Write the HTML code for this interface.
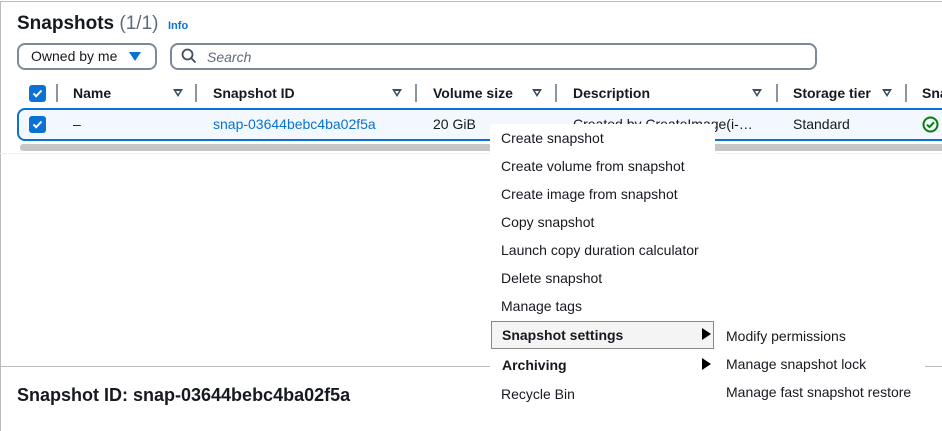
<!DOCTYPE html>
<html><head><style>
*{margin:0;padding:0;box-sizing:border-box}
body{width:942px;height:423px;overflow:hidden;background:#fff;font-family:"Liberation Sans",Arial,sans-serif;color:#16191f;position:relative}
.a{position:absolute;white-space:nowrap}
.frame{left:0;top:1px;width:960px;height:430px;border-left:1px solid #bbb;border-top:1px solid #bbb}
.h{font-weight:bold;font-size:14px;color:#16191f}
.sep{position:absolute;top:84px;width:2px;height:18px;background:#8c959f}
.tri{position:absolute;top:89px;width:0;height:0;border-left:5px solid transparent;border-right:5px solid transparent;border-top:8px solid #414d5c}
.tri:after{content:"";position:absolute;left:-2px;top:-6px;border-left:2px solid transparent;border-right:2px solid transparent;border-top:3px solid #fff}
.cb{position:absolute;width:17px;height:17px;background:#0972d3;border-radius:3px}
.cb svg{position:absolute;left:2px;top:2px}
.mi{position:absolute;left:501px;font-size:14px}
.si{position:absolute;left:726px;font-size:14px}
</style></head><body>
<div class="a frame"></div>
<div class="a" style="left:17px;top:13px;font-size:19px;font-weight:bold">Snapshots <span style="font-weight:normal;color:#5f6b7a">(1/1)</span></div>
<div class="a" style="left:168px;top:20px;font-size:11px;font-weight:bold;color:#0972d3">Info</div>
<div class="a" style="left:17px;top:43px;width:140px;height:27px;border:2px solid #7d8998;border-radius:8px"></div>
<div class="a" style="left:31px;top:48px;font-size:14px">Owned by me</div>
<div class="a" style="left:129px;top:52px;border-left:6px solid transparent;border-right:6px solid transparent;border-top:9px solid #0972d3"></div>
<div class="a" style="left:170px;top:43px;width:647px;height:27px;border:2px solid #7d8998;border-radius:8px"></div>
<svg class="a" style="left:181px;top:48px" width="16" height="16" viewBox="0 0 16 16"><circle cx="6.5" cy="6.5" r="5" fill="none" stroke="#414d5c" stroke-width="1.8"/><path d="M10.3 10.3L14.5 14.5" stroke="#414d5c" stroke-width="1.8"/></svg>
<div class="a" style="left:207px;top:49px;font-size:14px;font-style:italic;color:#5f6b7a">Search</div>

<div class="cb" style="left:29px;top:85px"><svg width="13" height="13" viewBox="0 0 13 13"><path d="M2.5 6.5L5.2 9.2L10.5 3.5" stroke="#fff" stroke-width="2" fill="none"/></svg></div>
<div class="sep" style="left:56px"></div>
<div class="a h" style="left:73px;top:85px">Name</div><div class="tri" style="left:173px"></div>
<div class="sep" style="left:195px"></div>
<div class="a h" style="left:213px;top:85px">Snapshot ID</div><div class="tri" style="left:392px"></div>
<div class="sep" style="left:415px"></div>
<div class="a h" style="left:433px;top:85px">Volume size</div><div class="tri" style="left:532px"></div>
<div class="sep" style="left:555px"></div>
<div class="a h" style="left:573px;top:85px">Description</div><div class="tri" style="left:752px"></div>
<div class="sep" style="left:776px"></div>
<div class="a h" style="left:793px;top:85px">Storage tier</div><div class="tri" style="left:882px"></div>
<div class="sep" style="left:905px"></div>
<div class="a h" style="left:922px;top:85px">Snapshot</div>

<div class="a" style="left:17px;top:108px;width:940px;height:33px;background:#f2f8fd;border:2px solid #0972d3;border-radius:8px"></div>
<div class="cb" style="left:29px;top:116px"><svg width="13" height="13" viewBox="0 0 13 13"><path d="M2.5 6.5L5.2 9.2L10.5 3.5" stroke="#fff" stroke-width="2" fill="none"/></svg></div>
<div class="a" style="left:73px;top:116px;font-size:14px">–</div>
<div class="a" style="left:213px;top:116px;font-size:14px;color:#0972d3">snap-03644bebc4ba02f5a</div>
<div class="a" style="left:433px;top:116px;font-size:14px">20 GiB</div>
<div class="a" style="left:573px;top:116px;font-size:14px">Created by CreateImage(i-…</div>
<div class="a" style="left:793px;top:116px;font-size:14px">Standard</div>
<svg class="a" style="left:922px;top:116px" width="17" height="17" viewBox="0 0 17 17"><circle cx="8.5" cy="8.5" r="7" fill="none" stroke="#037f0c" stroke-width="2"/><path d="M5 8.7L7.5 11L12 6.3" stroke="#037f0c" stroke-width="2" fill="none"/></svg>
<div class="a" style="left:20px;top:144px;width:930px;height:7px;background:#c6c6c6;border-radius:3px"></div>
<div class="a" style="left:0;top:153px;width:942px;height:1px;background:#eee"></div>

<div class="a" style="left:0;top:366px;width:942px;height:1px;background:#bbb"></div>
<div class="a" style="left:17px;top:385px;font-size:18px;font-weight:bold">Snapshot ID: snap-03644bebc4ba02f5a</div>

<div class="a" style="left:490px;top:124px;width:225px;height:290px;background:#fff"></div>
<div class="a" style="left:715px;top:320px;width:210px;height:94px;background:#fff"></div>
<div class="a" style="left:491px;top:321px;width:223px;height:28px;background:#f4f4f4;border:1px solid #888"></div>
<div class="mi" style="top:130px">Create snapshot</div>
<div class="mi" style="top:158px">Create volume from snapshot</div>
<div class="mi" style="top:186px">Create image from snapshot</div>
<div class="mi" style="top:214px">Copy snapshot</div>
<div class="mi" style="top:242px">Launch copy duration calculator</div>
<div class="mi" style="top:270px">Delete snapshot</div>
<div class="mi" style="top:298px">Manage tags</div>
<div class="mi" style="top:327px;left:502px;font-weight:bold">Snapshot settings</div>
<div class="a" style="left:702px;top:328px;border-top:6px solid transparent;border-bottom:6px solid transparent;border-left:9px solid #000"></div>
<div class="mi" style="top:357px;left:502px;font-weight:bold">Archiving</div>
<div class="a" style="left:702px;top:358px;border-top:6px solid transparent;border-bottom:6px solid transparent;border-left:9px solid #000"></div>
<div class="mi" style="top:386px">Recycle Bin</div>
<div class="si" style="top:328px">Modify permissions</div>
<div class="si" style="top:356px">Manage snapshot lock</div>
<div class="si" style="top:384px">Manage fast snapshot restore</div>
</body></html>
